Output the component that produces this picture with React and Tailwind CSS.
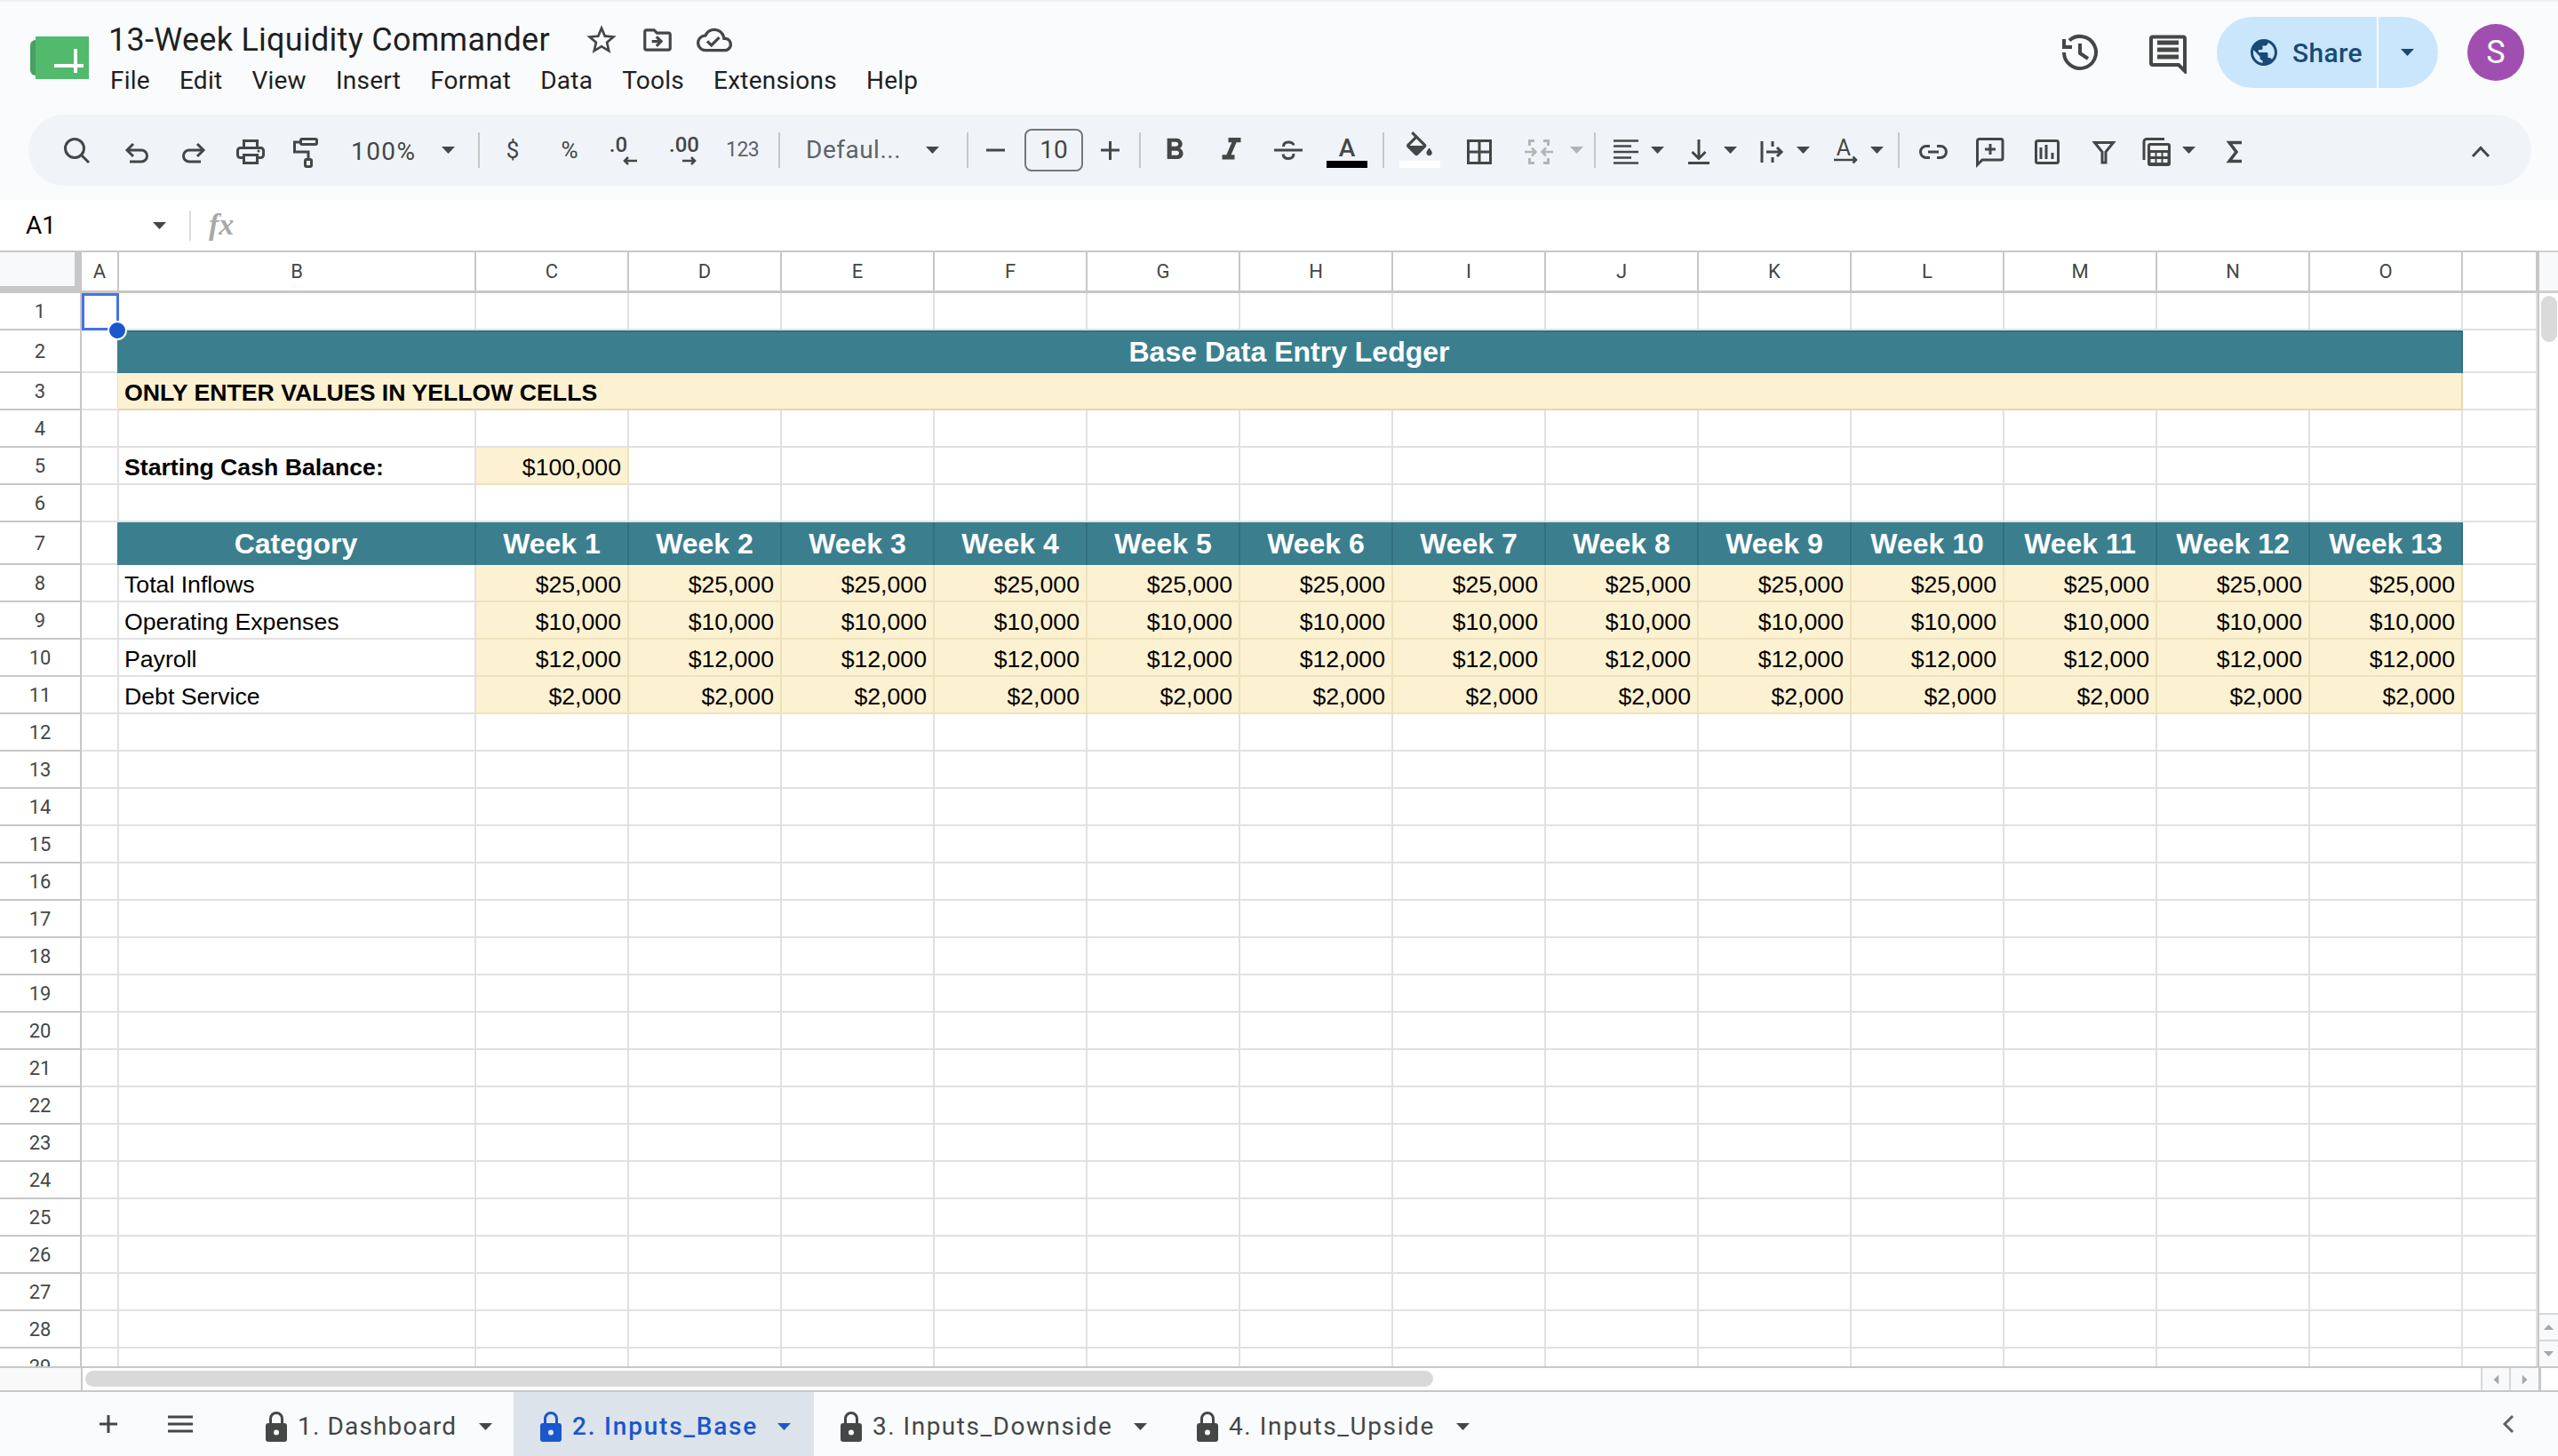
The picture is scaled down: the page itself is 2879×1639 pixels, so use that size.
import {
  MdFormatBold,
  MdFormatItalic,
  MdOutlineCloudDone,
  MdOutlineDriveFileMove,
  MdPublic,
  MdStarBorder,
} from "react-icons/md";

const weeks = ["Week 1", "Week 2", "Week 3", "Week 4", "Week 5", "Week 6", "Week 7", "Week 8", "Week 9", "Week 10", "Week 11", "Week 12", "Week 13"];
const letters = ["C", "D", "E", "F", "G", "H", "I", "J", "K", "L", "M", "N", "O"];
const menus = ["File", "Edit", "View", "Insert", "Format", "Data", "Tools", "Extensions", "Help"];
const emptyRows = [12, 13, 14, 15, 16, 17, 18, 19, 20, 21, 22, 23, 24, 25, 26, 27, 28, 29];

const dataRows = [
    { n: 8, label: "Total Inflows", value: "$25,000" },
    { n: 9, label: "Operating Expenses", value: "$10,000" },
    { n: 10, label: "Payroll", value: "$12,000" },
    { n: 11, label: "Debt Service", value: "$2,000" },
];

const tabs = [
    { name: "1. Dashboard", width: "w-[309px]", spacing: "tracking-[1.15px]", gap: "ml-[25px]" },
    { name: "2. Inputs_Base", width: "w-[338px]", spacing: "tracking-[1.8px]", gap: "ml-[22px]", active: true },
    { name: "3. Inputs_Downside", width: "w-[401px]", spacing: "tracking-[1.5px]", gap: "ml-[24px]" },
    { name: "4. Inputs_Upside", width: "w-[360px]", spacing: "tracking-[1.6px]", gap: "ml-[24px]" },
];

// 36px box, coordinates are real screenshot pixels from the icon's box origin
const Ic = ({ className = "", children, width = 36 }) => (
    <svg
        width={width}
        height="36"
        viewBox={`0 0 ${width} 36`}
        fill="none"
        stroke="currentColor"
        strokeWidth="3"
        className={`shrink-0 overflow-visible text-[#444746] ${className}`}
    >
        {children}
    </svg>
);

const Caret = ({ className = "" }) => (
    <svg width="15" height="8" viewBox="0 0 15 8" className={`shrink-0 ${className}`} fill="currentColor">
        <path d="M0 0h15L7.5 8z" />
    </svg>
);

const Sep = ({ className = "" }) => <div className={`w-[2px] h-[40px] shrink-0 bg-[#c7c7c7] ${className}`} />;

const Lock = ({ className = "", hole = "#f9fbfd" }) => (
    <svg width="24" height="34" viewBox="0 0 24 34" className={`shrink-0 ${className}`}>
        <path d="M5.5 15V8a6.5 6.5 0 0 1 13 0v7" fill="none" stroke="currentColor" strokeWidth="3" />
        <rect x="0" y="13" width="24" height="21" rx="3" fill="currentColor" />
        <circle cx="12" cy="23.5" r="3" fill={hole} />
    </svg>
);

const Logo = () => (
    <svg width="66" height="48" viewBox="0 0 66 48" className="shrink-0">
        <rect x="0" y="4" width="14" height="40" rx="6" fill="#4a9f62" />
        <rect x="6" y="0" width="60" height="48" fill="#52ba6c" />
        <path d="M27 33H60M51 14V41" stroke="#fff" strokeWidth="4" fill="none" />
    </svg>
);

const TopBar = () => (
    <div className="h-[129px] shrink-0 flex border-t-2 border-[#eef1f5] pl-[34px]">
        <div className="mt-[39px]">
            <Logo />
        </div>
        <div className="ml-[22px]">
            <div className="mt-[21px] h-[44px] flex items-center">
                <span className="text-[36px] leading-[44px] tracking-[0.28px] text-[#1f1f1f]">13-Week Liquidity Commander</span>
                <MdStarBorder className="ml-[38px] text-[#444746]" size={40} />
                <MdOutlineDriveFileMove className="ml-[24px] text-[#444746]" size={38} />
                <MdOutlineCloudDone className="ml-[25px] text-[#444746]" size={40} />
            </div>
            <div className="mt-[4px] h-[40px] flex items-center gap-[33px] pl-[2px] text-[28px] tracking-[0.25px] text-[#1f1f1f]">
                {menus.map((m) => (
                    <span key={m}>{m}</span>
                ))}
            </div>
        </div>
        <div className="ml-auto mr-[38px] mt-[17px] h-[80px] flex items-center">
            <svg width="48" height="48" viewBox="0 0 48 48" fill="none" stroke="#444746" strokeWidth="4" className="shrink-0">
                <path d="M12 10.5A18 18 0 1 1 6 24" />
                <path d="M6 9V18H15" />
                <path d="M24 14V25L33 31" />
            </svg>
            <svg width="48" height="48" viewBox="0 0 48 48" fill="none" className="ml-[51px] shrink-0">
                <path d="M7 6.500H41a2 2 0 0 1 2 2V45L36 38H7a2 2 0 0 1-2-2V8.500a2 2 0 0 1 2-2z" stroke="#444746" strokeWidth="4" />
                <path d="M12 14H36M12 22H36M12 30H36" stroke="#444746" strokeWidth="5" transform="translate(0 -1)" />
            </svg>
            <div className="ml-[31px] h-[80px] w-[249px] flex rounded-full bg-[#c9e6fc] text-[#194a75] overflow-hidden">
                <div className="w-[182px] flex items-center border-r-2 border-[#f9fbfd] pl-[35px]">
                    <MdPublic size={36} />
                    <span className="ml-[14px] text-[30px] font-medium tracking-[0.3px]">Share</span>
                </div>
                <div className="flex-1 flex items-center justify-center pr-[2px]">
                    <Caret />
                </div>
            </div>
            <div className="ml-[33px] w-[64px] h-[64px] rounded-full bg-[#a04fb0] flex items-center justify-center text-white text-[36px]">S</div>
        </div>
    </div>
);

const Toolbar = () => (
    <div className="h-[96px] shrink-0 pl-[32px] pr-[30px]">
        <div className="h-[80px] rounded-[40px] bg-[#f0f4f9] flex items-center text-[#444746]">
            <Ic className="ml-[36px]">
                <circle cx="16" cy="16" r="10.500" />
                <path d="M24 24L32 32" />
            </Ic>
            <Ic className="ml-[32px]">
                <path d="M14 11L7 18L14 25" />
                <path d="M8 18H23a6.500 6.500 0 0 1 0 13H10" />
            </Ic>
            <Ic className="ml-[28px]">
                <path d="M22 11L29 18L22 25" />
                <path d="M28 18H13a6.500 6.500 0 0 0 0 13H26" />
            </Ic>
            <Ic className="ml-[28px]">
                <path d="M10.500 15V7.500H25.500V15" />
                <rect x="3.500" y="15.500" width="29" height="11" rx="3" />
                <rect x="10.500" y="23.500" width="15" height="9" fill="#f0f4f9" />
                <circle cx="27" cy="19" r="1.500" fill="currentColor" stroke="none" />
            </Ic>
            <Ic className="ml-[26px]">
                <rect x="12.500" y="5.500" width="18" height="6" rx="1.500" />
                <path d="M12 9H5.500V20H21V27" />
                <rect x="17.500" y="28.500" width="7" height="8" rx="1.500" />
            </Ic>
            <span className="ml-[33px] w-[92px] pt-[3px] text-[28px] tracking-[1.4px]">100%</span>
            <Caret className="ml-[10px]" />
            <Sep className="ml-[26px]" />
            <span className="ml-[19px] w-[36px] text-center text-[26px]">$</span>
            <span className="ml-[28px] w-[36px] text-center text-[26px]">%</span>
            <div className="ml-[23px] w-[40px] h-[36px] flex flex-col items-center overflow-visible">
                <span className="text-[24px] leading-[24px] font-medium pr-[12px]">.0</span>
                <svg width="16" height="10" viewBox="0 0 16 10" fill="none" stroke="currentColor" strokeWidth="2.500" className="ml-[14px] mt-[1px] shrink-0">
                    <path d="M16 5H2M6 1L2 5L6 9" />
                </svg>
            </div>
            <div className="ml-[30px] w-[36px] h-[36px] flex flex-col items-center overflow-visible">
                <span className="text-[24px] leading-[24px] font-medium">.00</span>
                <svg width="16" height="10" viewBox="0 0 16 10" fill="none" stroke="currentColor" strokeWidth="2.500" className="ml-[12px] mt-[1px] shrink-0">
                    <path d="M0 5H14M10 1L14 5L10 9" />
                </svg>
            </div>
            <span className="ml-[29px] w-[36px] text-center text-[23px] tracking-[-0.5px] text-[#5f6368]">123</span>
            <Sep className="ml-[23px]" />
            <span className="ml-[29px] w-[122px] text-[28px] tracking-[0.5px] text-[#5f6368]">Defaul...</span>
            <Caret className="ml-[13px]" />
            <Sep className="ml-[31px]" />
            <Ic className="ml-[12px]">
                <path d="M8 18H29" />
            </Ic>
            <div className="ml-[15px] w-[66px] h-[48px] rounded-[8px] border-2 border-[#747775] flex items-center justify-center text-[28px]">10</div>
            <Ic className="ml-[12px]">
                <path d="M8 18H29M18.500 8V29" />
            </Ic>
            <Sep className="ml-[15px]" />
            <div className="ml-[20px] w-[36px] flex justify-center">
                <MdFormatBold size={40} className="shrink-0" />
            </div>
            <div className="ml-[28px] w-[36px] flex justify-center">
                <MdFormatItalic size={42} className="shrink-0" />
            </div>
            <Ic className="ml-[28px]">
                <path d="M2 18H34" />
                <path d="M12.500 14C12.500 10.500 15 9 18 9C21 9 23.500 10.500 24 12.500" />
                <path d="M12 22.500C12.500 26 15 27.500 18 27.500C21.500 27.500 24 26 24 22" />
            </Ic>
            <Ic className="ml-[25px]" width={46}>
                <text x="23" y="25" textAnchor="middle" fontSize="28" fontWeight="500" fontFamily="Roboto, sans-serif" fill="currentColor" stroke="none">A</text>
                <rect x="0" y="30" width="46" height="8" fill="#000" stroke="none" />
            </Ic>
            <Sep className="ml-[17px]" />
            <Ic className="ml-[17px]" width={46}>
                <g transform="translate(3.200 -3) scale(1.600)" fill="currentColor" stroke="none">
                    <path d="M16.560 8.940L7.620 0 6.210 1.410l2.380 2.380-5.150 5.150c-.59.59-.59 1.540 0 2.120l5.500 5.500c.29.29.68.44 1.060.44s.77-.15 1.060-.44l5.500-5.500c.59-.58.59-1.530 0-2.120zM5.210 10L10 5.210 14.790 10H5.210zM19 11.500s-2 2.170-2 3.500c0 1.100.9 2 2 2s2-.9 2-2c0-1.330-2-3.500-2-3.500z" />
                </g>
                <rect x="0" y="30" width="46" height="8" fill="#fff" stroke="none" />
            </Ic>
            <Ic className="ml-[26px]">
                <rect x="5.500" y="7.500" width="25" height="25" />
                <path d="M18 7V33M5 20H31" />
            </Ic>
            <Ic className="ml-[31px] text-[#b4b4b4]">
                <path d="M13 7.500H7.500V13M7.500 27V32.500H13M23 7.500H28.500V13M28.500 27V32.500H23" />
                <path d="M2 20H14M10 15.500L14.500 20L10 24.500M34 20H22M26 15.500L21.500 20L26 24.500" strokeWidth="2.500" />
            </Ic>
            <Caret className="ml-[17px] text-[#b4b4b4]" />
            <Sep className="ml-[12px]" />
            <Ic className="ml-[16px]">
                <path d="M4 7.500H32M4 13.500H24M4 20H32M4 26.500H24M4 32.500H32" strokeWidth="2.600" />
            </Ic>
            <Caret className="ml-[10px]" />
            <Ic className="ml-[21px]">
                <path d="M6 32.500H30M18 6V27M10.500 20L18 27.500L25.500 20" />
            </Ic>
            <Caret className="ml-[10px]" />
            <Ic className="ml-[21px]">
                <path d="M7 8V32M19 8V14M19 26V32M12 20H28M24 15L29 20L24 25" />
            </Ic>
            <Caret className="ml-[10px]" />
            <Ic className="ml-[22px]">
                <text x="16" y="24" textAnchor="middle" fontSize="25" fontFamily="Roboto, sans-serif" fill="currentColor" stroke="none">A</text>
                <path d="M5 29H30M26.500 25.500L30 29L26.500 32.500" strokeWidth="2.500" />
            </Ic>
            <Caret className="ml-[10px]" />
            <Sep className="ml-[16px]" />
            <Ic className="ml-[20px]">
                <path d="M14 13.500H10a6.500 6.500 0 0 0 0 13H14M22 13.500H26a6.500 6.500 0 0 1 0 13H22M12 20H24" />
            </Ic>
            <Ic className="ml-[28px]">
                <path d="M6 5.500H30a2 2 0 0 1 2 2V27a2 2 0 0 1-2 2H9L3.500 34.500V8a2.500 2.500 0 0 1 2.500-2.500z" />
                <path d="M18 11V23M12 17H24" />
            </Ic>
            <Ic className="ml-[28px]">
                <rect x="5.500" y="7.500" width="25" height="25" rx="2" />
                <path d="M11 15V28M17 12V28M24 21V28" />
            </Ic>
            <Ic className="ml-[28px]">
                <path d="M7.500 9.500H28.500L20 20V32H16V20z" />
            </Ic>
            <Ic className="ml-[24px]">
                <path d="M26 5.500H6a3 3 0 0 0-3 3V29" />
                <rect x="7" y="10" width="26" height="26" rx="3" fill="currentColor" stroke="none" />
                <rect x="10" y="13" width="20" height="5" fill="#f0f4f9" stroke="none" />
                <path d="M10.500 21h5v4h-5zM17.500 21h5v4h-5zM24.500 21h5v4h-5zM10.500 28h5v4h-5zM17.500 28h5v4h-5zM24.500 28h5v4h-5z" fill="#f0f4f9" stroke="none" />
            </Ic>
            <Caret className="ml-[10px]" />
            <Ic className="ml-[26px]">
                <path d="M26 9.500H12L20 20L12 30.500H26" strokeWidth="3.500" />
            </Ic>
            <Ic className="ml-auto mr-[39px]">
                <path d="M9 25L18 15.500L27 25" />
            </Ic>
        </div>
    </div>
);

const FormulaBar = () => (
    <div className="h-[57px] shrink-0 bg-white flex items-center">
        <span className="ml-[29px] w-[143px] text-[28px] text-black">A1</span>
        <Caret className="text-[#444746]" />
        <div className="ml-[26px] w-[2px] h-[34px] bg-[#dadce0]" />
        <span className="ml-[20px] pb-[2px] font-['Liberation_Serif',serif] italic font-bold text-[34px] text-[#a8a8a8]">fx</span>
    </div>
);

const Cell = ({ className = "", children }) => (
    <div className={`shrink-0 h-full box-border flex items-center overflow-hidden whitespace-nowrap border-r-2 border-b-2 border-[#e1e1e1] ${className}`}>
        {children}
    </div>
);

const Row = ({ n, tall, children }) => (
    <div className={`flex shrink-0 ${tall ? "h-[48px]" : "h-[42px]"}`}>
        <div className="w-[92px] shrink-0 h-full box-border flex items-center justify-center border-r-2 border-b-2 border-[#c7c7c7] bg-white text-[22px] text-[#444746] font-['Roboto',sans-serif]">
            {n}
        </div>
        {children}
    </div>
);

const ColA = () => <Cell className="w-[42px]" />;
const Extra = () => <Cell className="w-[84px]" />;

const BlankCols = () => (
    <>
        <Cell className="w-[402px]" />
        {letters.map((l) => (
            <Cell key={l} className="w-[172px]" />
        ))}
        <Extra />
    </>
);

const Sheet = () => (
    <div className="h-[1258px] shrink-0 flex bg-white overflow-hidden">
        <div className="w-[2858px] shrink-0 h-full flex flex-col overflow-hidden border-r-2 border-b-2 border-[#c7c7c7] box-border font-['Liberation_Sans',Arial,sans-serif] text-[26.67px] text-black">
            {/* column letters */}
            <div className="flex h-[48px] shrink-0 box-border border-t-2 border-[#c7c7c7] font-['Roboto',sans-serif] text-[22px] text-[#444746]">
                <div className="w-[92px] shrink-0 h-full box-border border-r-[8px] border-b-[8px] border-[#c7c7c7] bg-[#f8f9fa]" />
                {[
                    { l: "A", w: "w-[42px]" },
                    { l: "B", w: "w-[402px]" },
                    ...letters.map((l) => ({ l, w: "w-[172px]" })),
                    { l: "", w: "w-[84px]" },
                ].map((c) => (
                    <div key={c.l} className={`${c.w} shrink-0 h-full box-border flex items-center justify-center border-r-2 border-b-[3px] border-[#c7c7c7]`}>
                        {c.l}
                    </div>
                ))}
            </div>

            <Row n={1}>
                <div className="relative w-[42px] shrink-0 h-full">
                    <div className="absolute inset-0 border-[3px] border-[#4472e8] box-border" />
                    <div className="absolute right-[-9px] bottom-[-11px] w-[18px] h-[18px] rounded-full bg-[#1a56cc] border-2 border-white z-10 box-content" />
                </div>
                <BlankCols />
            </Row>
            <Row n={2} tall>
                <ColA />
                <div className="w-[2640px] -ml-[2px] shrink-0 h-full box-border flex items-center justify-center pb-[2px] bg-[#3b7f8f] border-t-2 border-r-2 border-[#32707f] text-white font-bold text-[32px]">
                    Base Data Entry Ledger
                </div>
                <Extra />
            </Row>
            <Row n={3}>
                <ColA />
                <div className="w-[2639px] -ml-[1px] shrink-0 h-full box-border flex items-center pl-[7px] pt-[3px] bg-[#fcf1d0] border-r-2 border-b-2 border-[#e3d8b2] font-bold">
                    ONLY ENTER VALUES IN YELLOW CELLS
                </div>
                <Extra />
            </Row>
            <Row n={4}>
                <ColA />
                <BlankCols />
            </Row>
            <Row n={5}>
                <ColA />
                <Cell className="w-[402px] pl-[6px] pt-[3px] font-bold">Starting Cash Balance:</Cell>
                <Cell className="w-[172px] justify-end pr-[7px] pt-[3px] bg-[#fcf1d0] border-[#eee2bd]">$100,000</Cell>
                {letters.slice(1).map((l) => (
                    <Cell key={l} className="w-[172px]" />
                ))}
                <Extra />
            </Row>
            <Row n={6}>
                <ColA />
                <BlankCols />
            </Row>
            <Row n={7} tall>
                <ColA />
                <div className="w-[404px] -ml-[2px] shrink-0 h-full box-border flex items-center justify-center bg-[#3b7f8f] border-r-2 border-[#32707f] text-white font-bold text-[32px]">
                    Category
                </div>
                {weeks.map((w) => (
                    <div key={w} className="w-[172px] shrink-0 h-full box-border flex items-center justify-center bg-[#3b7f8f] border-r-2 border-[#32707f] text-white font-bold text-[32px]">
                        {w}
                    </div>
                ))}
                <Extra />
            </Row>
            {dataRows.map((r) => (
                <Row key={r.n} n={r.n}>
                    <ColA />
                    <Cell className="w-[402px] pl-[6px] pt-[3px]">{r.label}</Cell>
                    {weeks.map((w) => (
                        <Cell key={w} className="w-[172px] justify-end pr-[7px] pt-[3px] bg-[#fcf1d0] border-[#eee2bd]">
                            {r.value}
                        </Cell>
                    ))}
                    <Extra />
                </Row>
            ))}
            {emptyRows.map((n) => (
                <Row key={n} n={n}>
                    <ColA />
                    <BlankCols />
                </Row>
            ))}
        </div>

        {/* vertical scrollbar */}
        <div className="flex-1 flex flex-col min-w-0">
            <div className="h-[48px] shrink-0 box-border bg-[#f8f9fa] border-t-2 border-b-[3px] border-[#d0d0d0]" />
            <div className="mt-[3px] ml-[2px] w-[18px] h-[52px] rounded-[9px] bg-[#dadada]" />
            <div className="flex-1" />
            <div className="h-[32px] shrink-0 box-border border-t-2 border-b-2 border-[#d8d8d8] bg-[#f8f9fa] flex items-center justify-center text-[#a8a8a8]">
                <Caret className="rotate-180 scale-75" />
            </div>
            <div className="h-[30px] shrink-0 bg-[#f8f9fa] flex items-center justify-center text-[#a8a8a8] border-b-2 border-[#c7c7c7] box-border">
                <Caret className="scale-75" />
            </div>
        </div>
    </div>
);

const HScroll = () => (
    <div className="h-[27px] shrink-0 box-border flex bg-white border-b-2 border-[#c7c7c7]">
        <div className="w-[93px] shrink-0 h-full box-border bg-[#f9f9f9] border-r-2 border-[#c7c7c7]" />
        <div className="ml-[3px] mt-[3px] w-[1517px] h-[18px] rounded-[9px] bg-[#d9d9d9]" />
        <div className="ml-auto h-full w-[65px] flex box-border border-l-2 border-[#d8d8d8] bg-[#f8f9fa] text-[#a8a8a8]">
            <div className="w-[32px] h-full box-border flex items-center justify-center border-r-2 border-[#d8d8d8]">
                <Caret className="rotate-90 scale-75" />
            </div>
            <div className="flex-1 flex items-center justify-center">
                <Caret className="-rotate-90 scale-75" />
            </div>
        </div>
        <div className="w-[22px] h-full box-border border-l-[3px] border-[#c7c7c7]" />
    </div>
);

const TabBar = () => (
    <div className="flex-1 flex items-stretch bg-[#f9fbfd] min-h-0">
        <div className="flex items-center">
            <svg width="24" height="24" viewBox="0 0 24 24" fill="none" stroke="#444746" strokeWidth="3" className="ml-[110px] shrink-0">
                <path d="M2 12H22M12 2V22" />
            </svg>
            <svg width="28" height="20" viewBox="0 0 28 20" fill="none" stroke="#444746" strokeWidth="3" className="ml-[55px] shrink-0">
                <path d="M0 2H28M0 10H28M0 18H28" />
            </svg>
        </div>
        <div className="ml-[52px] flex items-stretch">
            {tabs.map((t) => (
                <div
                    key={t.name}
                    className={`${t.width} ${t.spacing} shrink-0 flex items-center pl-[30px] pt-[5px] text-[28px] ${
                        t.active ? "bg-[#dde3ea] text-[#1a57cc] font-medium" : "text-[#444746]"
                    }`}
                >
                    <Lock hole={t.active ? "#dde3ea" : "#f9fbfd"} />
                    <span className="ml-[12px] whitespace-nowrap">{t.name}</span>
                    <Caret className={t.gap} />
                </div>
            ))}
        </div>
        <div className="ml-auto mr-[49px] flex items-center">
            <svg width="14" height="22" viewBox="0 0 14 22" fill="none" stroke="#5f6368" strokeWidth="3" className="shrink-0">
                <path d="M12 2L3 11L12 20" />
            </svg>
        </div>
    </div>
);

const App = () => (
    <div className="w-[2879px] h-[1639px] flex flex-col overflow-hidden bg-[#f9fbfd] font-['Roboto',sans-serif]">
        <TopBar />
        <Toolbar />
        <FormulaBar />
        <Sheet />
        <HScroll />
        <TabBar />
    </div>
);

export default App;
